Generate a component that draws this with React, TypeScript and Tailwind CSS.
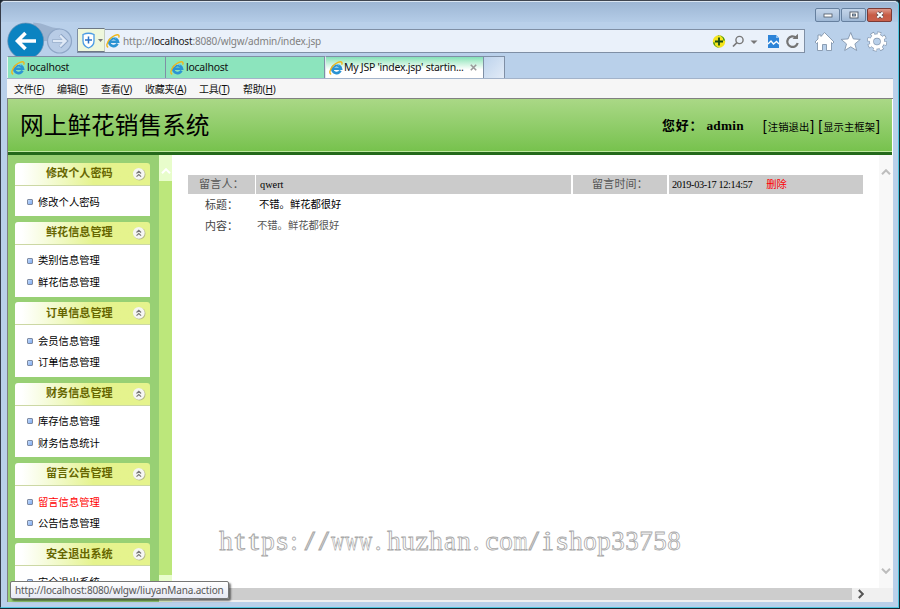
import clsx from 'clsx';

const menus = [
  { label: '文件', key: 'F', width: 'w-[43px]' },
  { label: '编辑', key: 'E', width: 'w-[44px]' },
  { label: '查看', key: 'V', width: 'w-[44px]' },
  { label: '收藏夹', key: 'A', width: 'w-[54px]' },
  { label: '工具', key: 'T', width: 'w-[44px]' },
  { label: '帮助', key: 'H', width: 'w-[44px]' },
];

const groups = [
  { title: '修改个人密码', items: ['修改个人密码'] },
  { title: '鲜花信息管理', items: ['类别信息管理', '鲜花信息管理'] },
  { title: '订单信息管理', items: ['会员信息管理', '订单信息管理'] },
  { title: '财务信息管理', items: ['库存信息管理', '财务信息统计'] },
  { title: '留言公告管理', items: ['留言信息管理', '公告信息管理'] },
  { title: '安全退出系统', items: ['安全退出系统'] },
];

const ACTIVE_ITEM = '留言信息管理';
const WATERMARK = 'https://www.huzhan.com/ishop33758';

function IeLogo() {
  return (
    <svg viewBox="0 0 14 14" className="size-[14px] shrink-0">
      <path d="M4 7.800h8A4.500 4.500 0 0 0 3.200 7.800a4.400 4.400 0 0 0 8.300 1.900" fill="none" stroke="#2b93d3" strokeWidth="2.600" />
      <path d="M3.600 6.200a4.300 4.300 0 0 1 6.600-2" fill="none" stroke="#8ad4f5" strokeWidth="1" />
      <path
        d="M2.200 13.200C-.2 12.600.8 8.700 3.600 5.300 6.800 1.700 11.500-.1 12.700 1.300c.5.600.4 1.500-.1 2.400"
        fill="none"
        stroke="#efb71c"
        strokeWidth="1.400"
      />
    </svg>
  );
}

function WindowButtons() {
  const base = 'flex h-[14px] w-[25px] items-center justify-center rounded-[2px] border';
  return (
    <div className="flex gap-px">
      <div className={clsx(base, 'border-[#66809f] bg-linear-to-b from-[#c3d5ea] via-[#b4c8e0] to-[#9db7d5]')}>
        <svg viewBox="0 0 10 6" className="h-[6px] w-[10px]">
          <rect x="1" y="2" width="8" height="3" fill="#fff" stroke="#4c5563" strokeWidth="0.8" />
        </svg>
      </div>
      <div className={clsx(base, 'border-[#66809f] bg-linear-to-b from-[#c3d5ea] via-[#b4c8e0] to-[#9db7d5]')}>
        <svg viewBox="0 0 10 8" className="h-[8px] w-[10px]">
          <rect x="1" y="1" width="8" height="6" fill="#fff" stroke="#4c5563" strokeWidth="0.9" />
          <rect x="3.500" y="3" width="3" height="2" fill="#9db7d5" stroke="#4c5563" strokeWidth="0.8" />
        </svg>
      </div>
      <div className={clsx(base, 'border-[#7c3a35] bg-linear-to-b from-[#dd9a8d] via-[#c75b45] to-[#c9604c]')}>
        <svg viewBox="0 0 10 8" className="h-[8px] w-[10px]">
          <path d="M2.300 1.500l5.400 5M7.700 1.500l-5.400 5" stroke="#5a4a50" strokeWidth="3.600" />
          <path d="M2.300 1.500l5.400 5M7.700 1.500l-5.400 5" stroke="#fff" strokeWidth="2" />
        </svg>
      </div>
    </div>
  );
}

function NavRow() {
  return (
    <div className="flex h-[34px] items-start overflow-hidden">
      <svg viewBox="0 0 70 34" className="h-[34px] w-[70px] shrink-0">
        <path d="M26 .5C38 1 42 6 53 6.500L47 19H32z" fill="#9db3cf" />
        <circle cx="18.700" cy="19" r="18" fill="#0b83c1" stroke="#7593b3" strokeWidth="0.700" />
        <path d="M29 19H11M18.500 11l-8 8 8 8" fill="none" stroke="#fff" strokeWidth="3.600" />
        <circle cx="52.500" cy="19" r="12" fill="#b8cce6" stroke="#8ea6c6" strokeWidth="1.200" />
        <path d="M45.500 19h13M53 13l6 6-6 6" fill="none" stroke="#8ea6c6" strokeWidth="3.800" />
        <path d="M46 19h12M53 13.500l5.500 5.500-5.500 5.500" fill="none" stroke="#dfe9f6" strokeWidth="2.400" />
      </svg>
      <div className="mt-[7px] flex h-[24px] w-[728px] items-center border border-[#7f8fa5] bg-[#eaf1fa]">
        <div className="-mt-[2px] flex h-[24px] w-[27px] shrink-0 items-center gap-[3px] border border-l-0 border-[#6d7784] border-r-[#c5cfc0] bg-[#eef7dc] pl-[4px]">
          <svg viewBox="0 0 13 17" className="h-[17px] w-[13px]">
            <path d="M1 2.500Q6.500 0 12 2.500V9q0 5-5.500 7Q1 14 1 9z" fill="#fff" stroke="#4a9be4" strokeWidth="1.300" />
            <path d="M6.500 4.500v7M3 8h7" stroke="#2a72c8" strokeWidth="1.500" />
          </svg>
          <svg viewBox="0 0 5 3" className="h-[3px] w-[5px]">
            <path d="M0 0h5L2.500 3z" fill="#777" />
          </svg>
        </div>
        <div className="ml-[1px] flex flex-1 items-center gap-[3px]">
          <IeLogo />
          <span className="pt-px font-['Noto_Sans',sans-serif] text-[10px] tracking-[-0.160px] whitespace-nowrap text-[#808080]">
            http://<span className="text-[#222]">localhost</span>:8080/wlgw/admin/index.jsp
          </span>
        </div>
        <svg viewBox="0 0 92 22" className="h-[22px] w-[92px] shrink-0">
          <circle cx="7" cy="11.500" r="6.200" fill="#f5e51b" />
          <path d="M4 6.100A6.200 6.200 0 0 1 13 10.500l-1.500.3A5 5 0 0 0 4 6.100z" fill="#2f8f24" />
          <path d="M10 16.900A6.200 6.200 0 0 1 1 12.500l1.500-.3A5 5 0 0 0 10 16.900z" fill="#2f8f24" />
          <path d="M7 7.500v8M3 11.500h8" stroke="#184d12" strokeWidth="1.800" />
          <circle cx="27.500" cy="10" r="3.600" fill="none" stroke="#777" strokeWidth="1.400" />
          <path d="M25 12.500l-4 4" stroke="#777" strokeWidth="1.700" />
          <path d="M38.500 10.500h7L42 14z" fill="#777" />
          <path d="M56 5h8l3 3v10H56z" fill="#2d84d8" />
          <path d="M64 5v3h3z" fill="#8fc0ee" />
          <path d="M56 14l3-3 2.500 3 3-2.500 2.500 2.500" fill="none" stroke="#fff" strokeWidth="1.400" />
          <path d="M84 7.600A5.300 5.300 0 1 0 85.700 13" fill="none" stroke="#757575" strokeWidth="2.200" />
          <path d="M80.500 9h5.500V3.800z" fill="#757575" />
        </svg>
      </div>
      <svg viewBox="0 0 80 24" className="mt-[8px] ml-[8px] h-[24px] w-[80px] shrink-0">
        <g fill="#fff" stroke="#8295ad" strokeWidth="0.900" strokeLinejoin="round">
          <path d="M11.500 2.500l9.500 9.500-1.500 1.500-1-1v8h-5v-6h-4v6h-5v-8l-1 1L2 12l3-3V5h3v1.500z" />
          <path d="M37.700 2.500l2.600 6.400 7 .5-5.400 4.500 1.800 6.600-6-3.700-6 3.700 1.800-6.600-5.400-4.500 7-.5z" />
        </g>
        <circle cx="64" cy="11.500" r="8" fill="none" stroke="#8295ad" strokeWidth="4.200" strokeDasharray="3.600 2.683" />
        <circle cx="64" cy="11.500" r="5.500" fill="none" stroke="#8295ad" strokeWidth="4.800" />
        <circle cx="64" cy="11.500" r="8" fill="none" stroke="#fff" strokeWidth="2.800" strokeDasharray="2.800 3.483" strokeDashoffset="-0.400" />
        <circle cx="64" cy="11.500" r="5.500" fill="none" stroke="#fff" strokeWidth="3.500" />
      </svg>
    </div>
  );
}

function TabBar() {
  const tab = 'flex h-full items-center border-t border-r border-[#7f8fa5] pl-[3px]';
  return (
    <div className="flex h-[23px] border-b border-[#a3b3ca] font-['Noto_Sans',sans-serif] text-[10.500px] text-[#111]">
      <div className={clsx(tab, 'w-[159px] gap-[2px] border-l border-l-[#e8f5f0] bg-[#8ce4bd]')}>
        <IeLogo />
        <span className="pt-px tracking-[-0.260px]">localhost</span>
      </div>
      <div className={clsx(tab, 'w-[159px] gap-[2px] bg-[#8ce4bd] pl-[4px]')}>
        <IeLogo />
        <span className="pt-px tracking-[-0.260px]">localhost</span>
      </div>
      <div className={clsx(tab, 'w-[159px] gap-px border-l border-l-[#dce8ee] bg-linear-to-b from-[#84e2b7] to-white to-60%')}>
        <IeLogo />
        <span className="pt-px tracking-[-0.260px] whitespace-nowrap">My JSP 'index.jsp' startin...</span>
        <svg viewBox="0 0 7 7" className="ml-[5px] size-[7px]">
          <path d="M.8.800l5.400 5.400M6.200.800L.800 6.200" stroke="#999" strokeWidth="1.600" />
        </svg>
      </div>
      <div className="w-[21px] border-t border-r border-[#7f8fa5] bg-linear-to-br from-[#bdd3ec] to-[#e2ebf7]" />
    </div>
  );
}

function MenuBar() {
  return (
    <div className="flex h-[19px] items-center bg-[#f6f6f6] pt-px pl-[7px] font-['Noto_Sans','Noto_Sans_CJK_SC',sans-serif] text-[10px] text-[#111]">
      {menus.map((m) => (
        <span key={m.key} className={clsx(m.width, 'tracking-[-0.200px] whitespace-nowrap')}>
          {m.label}(<u>{m.key}</u>)
        </span>
      ))}
    </div>
  );
}

function SiteHeader() {
  return (
    <div className="mr-px h-[56px] border-b-[3px] border-[#24691b]">
      <div className="flex h-[53px] items-center border-b border-[#bfe8a0] bg-linear-to-b from-[#aad886] to-[#77c24d] pt-[3px] pr-[12px] pl-[12px] text-black">
        <h1 className="flex-1 text-[23.700px] leading-none">网上鲜花销售系统</h1>
        <span className="mr-[19px] font-['Liberation_Serif','Noto_Sans_CJK_SC',serif] text-[13.300px] font-bold whitespace-nowrap">
          <span className="text-[12.900px] tracking-[0.900px]">您好：</span>
          <span className="ml-[3px] tracking-[0.250px]">admin</span>
        </span>
        <span className="flex items-center gap-[4px] text-[10.300px] whitespace-nowrap">
          <span>
            <span className="mr-[1px] text-[14px]">[</span>
            <span className="tracking-[0.100px]">注销退出</span>
            <span className="ml-[1px] text-[14px]">]</span>
          </span>
          <span>
            <span className="mr-[1px] text-[14px]">[</span>
            <span className="tracking-[0.100px]">显示主框架</span>
            <span className="ml-[1px] text-[14px]">]</span>
          </span>
        </span>
      </div>
    </div>
  );
}

function CollapseIcon() {
  return (
    <svg viewBox="0 0 14 14" className="size-[14px]">
      <circle cx="7.500" cy="7.600" r="6" fill="#b5b98a" />
      <circle cx="6.800" cy="6.800" r="5.900" fill="#f6f6f3" />
      <path d="M4.500 6.500l2.300-2.200 2.300 2.200M4.500 9.700l2.300-2.200 2.300 2.200" fill="none" stroke="#777" strokeWidth="1.100" />
    </svg>
  );
}

function Sidebar() {
  return (
    <div className="flex w-[151px] shrink-0 flex-col gap-[5.500px] overflow-hidden bg-[#98d074] pt-[8px] pl-[7px]">
      {groups.map((group) => (
        <div key={group.title} className="w-[135px] shrink-0">
          <div className="flex h-[23px] items-center rounded-t-[3px] border-b border-[#ccd8a4] bg-linear-to-r from-white from-5% to-[#e5f38d] to-58% pr-[4px] pl-[31px]">
            <span className="flex-1 text-[11.100px] leading-none font-bold text-[#666600]">{group.title}</span>
            <CollapseIcon />
          </div>
          <div className="bg-white pt-[5px] pb-[3.700px] pl-[12px]">
            {group.items.map((item) => (
              <div key={item} className="flex h-[21.600px] items-center gap-[5px]">
                <span className="size-[6px] rounded-[1px] border border-[#7d8aa3] bg-linear-to-br from-[#c5dcfb] to-[#7faaf0]" />
                <span
                  className={clsx(
                    'pt-[2px] text-[10.300px] leading-none',
                    item === ACTIVE_ITEM ? 'text-[#ff0000]' : 'text-black'
                  )}
                >
                  {item}
                </span>
              </div>
            ))}
          </div>
        </div>
      ))}
    </div>
  );
}

function Chevron({ className }: { className?: string }) {
  return (
    <svg viewBox="0 0 10 6" className={clsx('h-[6px] w-[10px]', className)}>
      <path d="M1 5.200l4-4 4 4" fill="none" stroke="currentColor" strokeWidth="2" />
    </svg>
  );
}

function Message() {
  return (
    <div className="flex flex-col pt-[20px] pl-[16px] text-[10.300px] leading-none">
      <div className="flex h-[19px] gap-[2px] text-black *:flex *:items-center *:bg-[#cbcbcb]">
        <div className="w-[67px] justify-center text-[11px] tracking-[0.200px] text-[#555]">留言人：</div>
        <div className="-ml-px w-[315px] pt-[2px] pl-[4px] font-['Liberation_Serif',serif] text-[10.300px]">qwert</div>
        <div className="w-[94px] justify-center text-[11px] tracking-[0.200px] text-[#555]">留言时间：</div>
        <div className="w-[194px] pt-px pl-[3px]">
          <span className="font-['Liberation_Serif',serif] text-[10.300px] tracking-[-0.370px]">2019-03-17 12:14:57</span>
          <span className="ml-[14px] text-[#ff0000]">删除</span>
        </div>
      </div>
      <div className="flex h-[22px] items-center pt-px">
        <div className="w-[71px] pl-[17px] text-[11px] text-[#444]">标题：</div>
        <div className="text-black">不错。鲜花都很好</div>
      </div>
      <div className="flex h-[20px] items-center">
        <div className="w-[69px] pl-[17px] text-[11px] text-[#444]">内容：</div>
        <div className="text-[#555]">不错。鲜花都很好</div>
      </div>
    </div>
  );
}

function Watermark() {
  return (
    <div className="absolute top-[523px] left-[219px] font-['Liberation_Serif',serif] text-[27px] leading-[36px] whitespace-nowrap text-white">
      {WATERMARK.split('').map((ch, i) => (
        <span key={i} className="inline-flex w-[14px] justify-center">
          <span
            className={clsx(
              'inline-block [-webkit-text-stroke:0.800px_#a8a8a8]',
              'wm'.includes(ch) && 'scale-x-[0.680]',
              'ti/'.includes(ch) && 'scale-x-[1.350]',
              'scz'.includes(ch) && 'scale-x-[1.120]',
              ':.'.includes(ch) && '-translate-x-[2px]'
            )}
          >
            {ch}
          </span>
        </span>
      ))}
    </div>
  );
}

export default function App() {
  return (
    <div className="relative h-[609px] w-[900px] overflow-hidden bg-[#1c2630] font-['Liberation_Sans','Noto_Sans_CJK_SC',sans-serif]">
      <div className="flex h-[608px] w-[899px] flex-col rounded-t-[5px] border border-t-[#3f4550] border-r-[#4fc6e0] border-b-[#4fc6e0] border-l-[#353b48] bg-[#b9d0ea] pr-[5px] pl-[6px]">
        <div className="-mr-[5px] -ml-[6px] flex h-[21px] justify-end rounded-t-[4px] border-t border-[#dbe6f2] bg-linear-to-b from-[#9db6d4] to-[#b4cce7] pt-[6px] pr-[6px]">
          <WindowButtons />
        </div>
        <NavRow />
        <TabBar />
        <MenuBar />
        <div className="flex h-[504px] flex-col border-t border-l border-[#808080] bg-white">
          <SiteHeader />
          <div className="flex min-h-0 flex-1">
            <Sidebar />
            <div className="flex w-[13px] shrink-0 flex-col justify-between bg-[#bce77b]">
              <div className="flex h-[26px] items-center justify-center bg-[#e8fdcb] pt-[6px] text-white">
                <Chevron />
              </div>
              <div className="h-[27px] bg-[#e8fdcb]" />
            </div>
            <div className="flex min-w-0 flex-1 flex-col">
              <div className="flex flex-1">
                <div className="min-w-0 flex-1">
                  <Message />
                </div>
                <div className="flex w-[14px] flex-col items-center justify-between bg-[#f8f8f8] pt-[14px] pb-[14px] text-[#bdbdbd]">
                  <Chevron />
                  <Chevron className="rotate-180" />
                </div>
              </div>
              <div className="flex h-[14px] items-start bg-[#f0f0f0] pl-[27px]">
                <div className="h-[12px] w-[653px] bg-[#cdcdcd]" />
                <Chevron className="mt-[3px] ml-[4px] rotate-90 text-[#555]" />
              </div>
            </div>
          </div>
        </div>
      </div>
      <Watermark />
      <div className="absolute top-[581px] left-[10px] flex h-[18px] w-[219px] items-center rounded-[2px] border border-[#767676] bg-linear-to-b from-white to-[#e6e8f3] pl-[4px] font-['Noto_Sans',sans-serif] text-[10px] tracking-[-0.160px] whitespace-nowrap text-[#575757] shadow-[2px_2px_2px_rgba(0,0,0,0.5)]">
        http://localhost:8080/wlgw/liuyanMana.action
      </div>
    </div>
  );
}
